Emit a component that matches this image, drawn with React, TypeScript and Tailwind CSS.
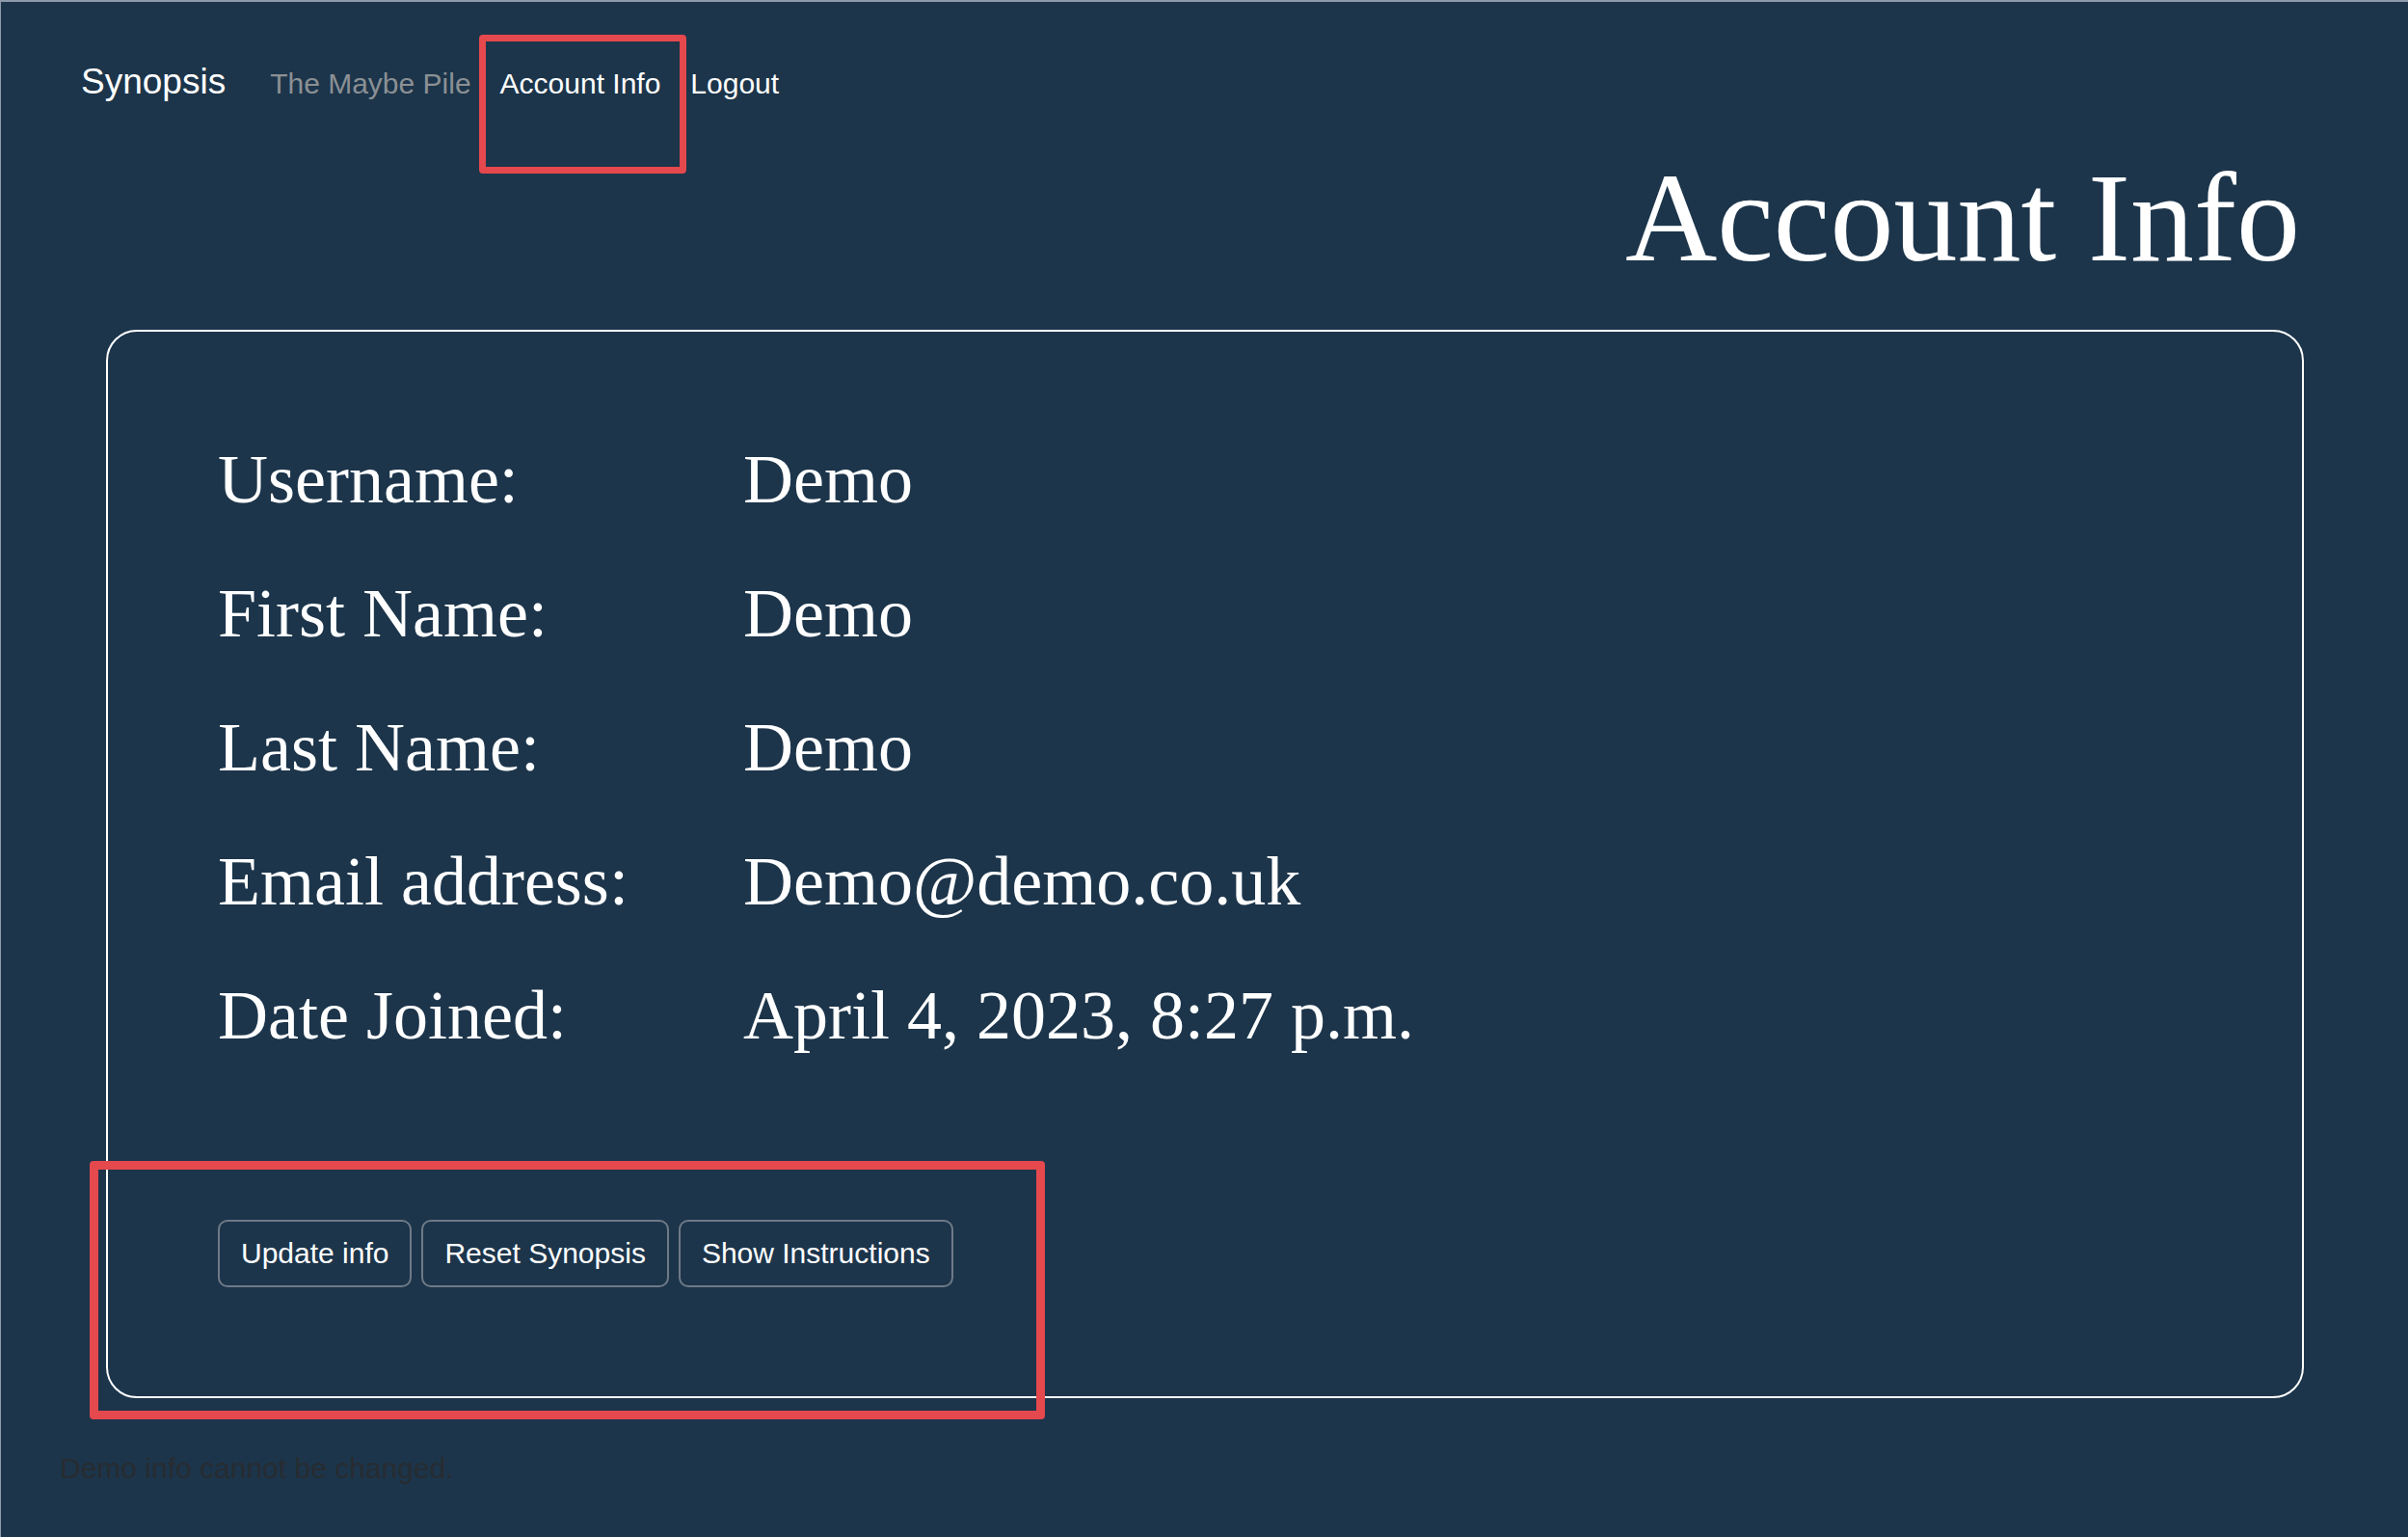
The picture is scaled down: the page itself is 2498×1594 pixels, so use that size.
import React from "react";

const rows = [
  { label: "Username:", value: "Demo" },
  { label: "First Name:", value: "Demo" },
  { label: "Last Name:", value: "Demo" },
  { label: "Email address:", value: "Demo@demo.co.uk" },
  { label: "Date Joined:", value: "April 4, 2023, 8:27 p.m." },
];

const buttons = ["Update info", "Reset Synopsis", "Show Instructions"];

export default function App() {
  return (
    <div className="relative min-h-screen w-full bg-[#1c354b] shadow-[inset_1px_2px_0_#8d9bab] font-['Liberation_Sans',Arial,sans-serif]">
      {/* Navbar */}
      <nav className="flex items-baseline pl-[84px] pt-[57px]">
        <span className="mr-[31px] text-[37px] leading-[1.5] text-white">Synopsis</span>
        <a className="px-[15px] text-[30px] leading-[1.5] text-[#8b9094]">The Maybe Pile</a>
        <a className="px-[15px] text-[30px] leading-[1.5] text-white">Account Info</a>
        <a className="px-[16px] text-[30px] leading-[1.5] text-white">Logout</a>
      </nav>

      <div className="ml-[110px] mr-[108px]">
        {/* Heading */}
        <h1 className="mt-[47px] pr-[4px] text-right font-['Liberation_Serif',serif] text-[132px] leading-none text-white">
          Account Info
        </h1>

        {/* Card */}
        <div className="mt-[50px] rounded-[32px] border-2 border-white pl-[114px] pt-[84px] pb-[113px]">
          <div className="flex flex-col font-['Liberation_Serif',serif] text-[72px] leading-[139px] text-white">
            {rows.map((row) => (
              <div key={row.label} className="flex">
                <span className="w-[545px] shrink-0">{row.label}</span>
                <span>{row.value}</span>
              </div>
            ))}
          </div>

          <div className="mt-[142px] flex gap-[10px]">
            {buttons.map((label) => (
              <button
                key={label}
                className="h-[70px] rounded-[10px] border-2 border-[#6e7a87] px-[22px] text-[30px] leading-none text-white"
              >
                {label}
              </button>
            ))}
          </div>
        </div>
      </div>

      <p className="mt-[50px] pl-[62px] text-[30px] leading-[1.5] text-[#272c31]">Demo info cannot be changed.</p>

      {/* Annotation boxes */}
      <div className="absolute left-[497px] top-[36px] h-[144px] w-[215px] rounded-[4px] border-[7px] border-[#e5484d]" />
      <div className="absolute left-[93px] top-[1204px] h-[268px] w-[991px] rounded-[4px] border-[9px] border-[#e5484d]" />
    </div>
  );
}
